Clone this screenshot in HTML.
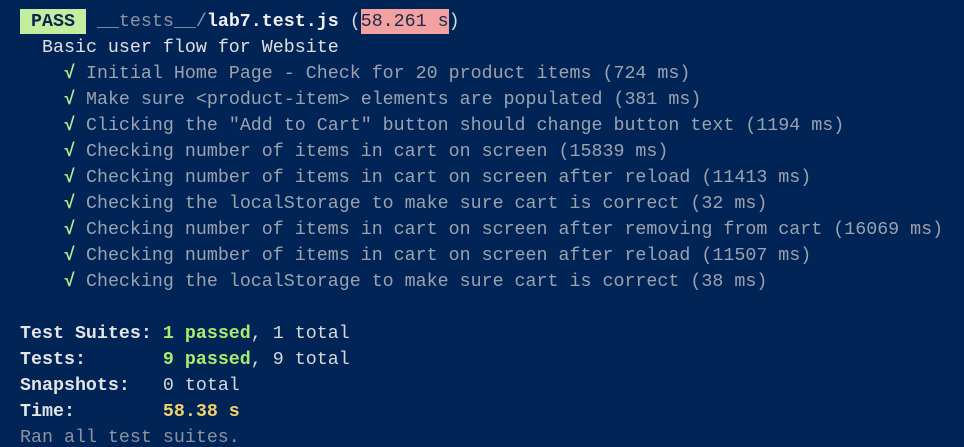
<!DOCTYPE html>
<html><head><meta charset="utf-8"><style>
html,body{margin:0;padding:0;background:#012456;width:964px;height:447px;overflow:hidden}
pre{margin:0;padding:9px 0 0 20px;font-family:"Liberation Mono",monospace;font-size:18.32px;line-height:26px;color:#d8d8d8;white-space:pre}
.pass{background:#c3eea0;color:#0b2550;font-weight:bold;padding:2px 0}
.dim{color:#8c93a2}
.b{font-weight:bold;color:#f0f0f0}
.slow{background:#f3a0a0;color:#1a2a50;padding:2px 0}
.ok{color:#b8ec8e;font-weight:bold}
.t{color:#9aa2ae}
.g{color:#a6ec6e;font-weight:bold}
.y{color:#f2d36a;font-weight:bold}
.lb{font-weight:bold;color:#e4e4e4}
</style></head><body><pre><span class="pass"> PASS </span> <span class="dim">__tests__/</span><span class="b">lab7.test.js</span> (<span class="slow">58.261 s</span>)
  <span style="color:#e0e0e0">Basic user flow for Website</span>
    <span class="ok">√</span> <span class="t">Initial Home Page - Check for 20 product items (724 ms)</span>
    <span class="ok">√</span> <span class="t">Make sure &lt;product-item&gt; elements are populated (381 ms)</span>
    <span class="ok">√</span> <span class="t">Clicking the "Add to Cart" button should change button text (1194 ms)</span>
    <span class="ok">√</span> <span class="t">Checking number of items in cart on screen (15839 ms)</span>
    <span class="ok">√</span> <span class="t">Checking number of items in cart on screen after reload (11413 ms)</span>
    <span class="ok">√</span> <span class="t">Checking the localStorage to make sure cart is correct (32 ms)</span>
    <span class="ok">√</span> <span class="t">Checking number of items in cart on screen after removing from cart (16069 ms)</span>
    <span class="ok">√</span> <span class="t">Checking number of items in cart on screen after reload (11507 ms)</span>
    <span class="ok">√</span> <span class="t">Checking the localStorage to make sure cart is correct (38 ms)</span>

<span class="lb">Test Suites: </span><span class="g">1 passed</span>, 1 total
<span class="lb">Tests:       </span><span class="g">9 passed</span>, 9 total
<span class="lb">Snapshots:   </span>0 total
<span class="lb">Time:        </span><span class="y">58.38 s</span>
<span class="dim">Ran all test suites.</span></pre></body></html>
